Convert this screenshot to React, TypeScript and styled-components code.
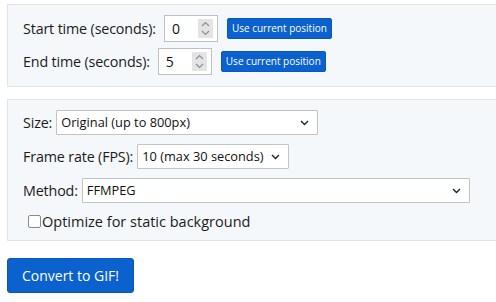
import React from "react";
import styled, { createGlobalStyle } from "styled-components";

const GlobalStyle = createGlobalStyle`
  html, body {
    margin: 0;
    padding: 0;
    background: #ffffff;
    overflow: hidden;
  }
  body {
    font-family: "Open Sans", "Noto Sans", sans-serif;
    color: #1b1b1b;
  }
`;

const Page = styled.div`
  width: 496px;
  height: 302px;
  padding: 4px 0 0 7px;
  box-sizing: border-box;
  overflow: hidden;
`;

const Panel = styled.div<{ $gap: number; $pad: string }>`
  width: 620px;
  box-sizing: border-box;
  background: #f5f8fb;
  border: 1px solid #e2e4e7;
  padding: ${(p) => p.$pad};
  display: flex;
  flex-direction: column;
  gap: ${(p) => p.$gap}px;
  margin-bottom: 12px;
`;

const Row = styled.div`
  display: flex;
  align-items: center;
  gap: 4px;
  font-size: 14.3px;
  height: 26px;
`;

const Label = styled.span`
  white-space: nowrap;
  letter-spacing: -0.15px;
`;

const NumberBox = styled.div`
  display: flex;
  align-items: center;
  width: 54px;
  height: 27px;
  box-sizing: border-box;
  border: 1px solid #bfbfbf;
  background: #fff;
  padding: 0 4px 0 7px;
  margin: 0 5px 0 4px;
`;

const NumberInput = styled.input`
  flex: 1;
  min-width: 0;
  border: none;
  outline: none;
  padding: 0;
  font: inherit;
  font-size: 14px;
  background: transparent;
  color: #111;
`;

const Spinner = styled.div`
  width: 15px;
  height: 19px;
  background: #e4e4e6;
  display: flex;
  align-items: center;
  justify-content: center;
`;

const SmallButton = styled.button`
  background: #0b61ce;
  color: #fff;
  border: 1px solid #0a58bc;
  border-radius: 2px;
  font-family: "Open Sans", "Noto Sans", sans-serif;
  font-size: 10px;
  padding: 0 4px;
  height: 21px;
  white-space: nowrap;
  cursor: pointer;
`;

const SelectWrap = styled.div<{ $width: number }>`
  position: relative;
  width: ${(p) => p.$width}px;
  height: 25px;
`;

const Select = styled.select`
  appearance: none;
  -webkit-appearance: none;
  width: 100%;
  height: 100%;
  box-sizing: border-box;
  border: 1px solid #c3c3c3;
  border-radius: 1px;
  background: #fff;
  font-family: "Open Sans", "Noto Sans", sans-serif;
  font-size: 12.8px;
  color: #111;
  padding: 0 24px 0 4px;
  outline: none;
`;

const Chevron = styled.svg`
  position: absolute;
  right: 9px;
  top: 10px;
  pointer-events: none;
`;

const CheckRow = styled.label`
  display: flex;
  align-items: center;
  gap: 1px;
  padding-left: 5px;
  font-size: 14.5px;
  height: 20px;
`;

const Check = styled.input`
  appearance: none;
  -webkit-appearance: none;
  margin: 0;
  width: 13px;
  height: 13px;
  border: 1px solid #8a8a8a;
  border-radius: 2px;
  background: #fff;
`;

const ConvertButton = styled.button`
  margin-top: 5px;
  background: #0b61ce;
  color: #fff;
  border: 1px solid #0a58bc;
  border-radius: 3px;
  font-family: "Open Sans", "Noto Sans", sans-serif;
  font-size: 14px;
  width: 127px;
  height: 35px;
  cursor: pointer;
`;

const SpinIcon = () => (
  <svg width="9" height="15" viewBox="0 0 9 15">
    <path d="M1 5 L4.5 1.5 L8 5" fill="none" stroke="#8f8f93" strokeWidth="1.2" />
    <path d="M1 10 L4.5 13.5 L8 10" fill="none" stroke="#8f8f93" strokeWidth="1.2" />
  </svg>
);

const NumberField = ({ value }: { value: string }) => (
  <NumberBox>
    <NumberInput defaultValue={value} />
    <Spinner>
      <SpinIcon />
    </Spinner>
  </NumberBox>
);

const Dropdown = ({ width, value }: { width: number; value: string }) => (
  <SelectWrap $width={width}>
    <Select defaultValue={value}>
      <option>{value}</option>
    </Select>
    <Chevron width="9" height="6" viewBox="0 0 9 6">
      <path d="M1 1 L4.5 4.5 L8 1" fill="none" stroke="#222" strokeWidth="1.4" />
    </Chevron>
  </SelectWrap>
);

export default function App() {
  return (
    <>
      <GlobalStyle />
      <Page>
        <Panel $gap={7} $pad="10px 15px 12px">
          <Row>
            <Label>Start time (seconds):</Label>
            <NumberField value="0" />
            <SmallButton>Use current position</SmallButton>
          </Row>
          <Row>
            <Label>End time (seconds):</Label>
            <NumberField value="5" />
            <SmallButton>Use current position</SmallButton>
          </Row>
        </Panel>
        <Panel $gap={8} $pad="9px 15px 9px">
          <Row>
            <Label>Size:</Label>
            <Dropdown width={262} value="Original (up to 800px)" />
          </Row>
          <Row>
            <Label>Frame rate (FPS):</Label>
            <Dropdown width={152} value="10 (max 30 seconds)" />
          </Row>
          <Row>
            <Label>Method:</Label>
            <Dropdown width={388} value="FFMPEG" />
          </Row>
          <CheckRow>
            <Check type="checkbox" />
            Optimize for static background
          </CheckRow>
        </Panel>
        <ConvertButton>Convert to GIF!</ConvertButton>
      </Page>
    </>
  );
}
